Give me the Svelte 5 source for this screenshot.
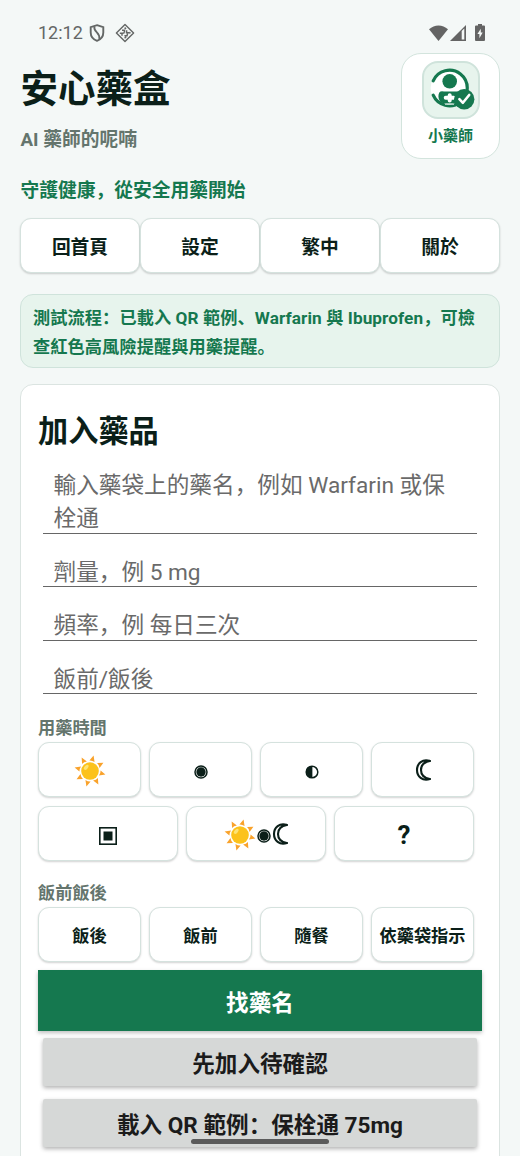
<script lang="ts">
	type Glyph = 'sun' | 'noon' | 'evening' | 'moon' | 'box' | 'help';

	const navItems = ['回首頁', '設定', '繁中', '關於'];

	const timeRows: Glyph[][][] = [
		[['sun'], ['noon'], ['evening'], ['moon']],
		[['box'], ['sun', 'noon', 'moon'], ['help']]
	];

	const mealOptions = ['飯後', '飯前', '隨餐', '依藥袋指示'];

	const rays = [12, 57, 102, 147, 192, 237, 282, 327];

	let name = $state('');
	let dose = $state('');
	let frequency = $state('');
	let meal = $state('');
</script>

{#snippet glyph(kind: Glyph)}
	{#if kind === 'sun'}
		<svg class="sun" width="32" height="32" viewBox="0 0 32 32">
			{#each rays as angle}
				<path d="M13.2 5.8 16.3.2 18.6 6.3Q15.8 5 13.2 5.8Z" fill="#f9a22b" transform="rotate({angle} 16 16)" />
			{/each}
			<circle cx="16" cy="16" r="8.8" fill="#fcc21b" />
			<ellipse cx="12.2" cy="12.3" rx="3" ry="1.7" fill="#fde374" transform="rotate(-50 12.2 12.3)" />
		</svg>
	{:else if kind === 'noon'}
		<svg class="low noon" width="14" height="14" viewBox="0 0 14 14">
			<circle cx="7" cy="7" r="6" fill="none" stroke="#0b1f19" stroke-width="1.5" />
			<circle cx="7" cy="7" r="4.7" fill="#0b1f19" />
		</svg>
	{:else if kind === 'evening'}
		<svg class="low" width="14" height="14" viewBox="0 0 14 14">
			<circle cx="7" cy="7" r="5.8" fill="none" stroke="#0b1f19" stroke-width="1.5" />
			<path d="M7.4 1A6 6 0 0 0 7.4 13Z" fill="#0b1f19" />
		</svg>
	{:else if kind === 'moon'}
		<svg class="moon" width="16" height="22" viewBox="0 0 16 22">
			<path
				d="M14.8 1.9C7.5-.4 2 4.4 2 11S7.5 22.4 14.8 20.1C9.4 19 6 15.5 6 11S9.4 3 14.8 1.9Z"
				fill="none"
				stroke="#0b1f19"
				stroke-width="2.1"
			/>
		</svg>
	{:else if kind === 'box'}
		<svg class="low" width="18" height="18" viewBox="0 0 18 18">
			<rect x=".8" y=".8" width="16.4" height="16.4" fill="none" stroke="#0b1f19" stroke-width="1.6" />
			<rect x="4.5" y="4.5" width="9" height="9" fill="#0b1f19" />
		</svg>
	{:else}
		<span class="question">?</span>
	{/if}
{/snippet}

<div class="screen">
	<div class="status">
		<span class="clock">12:12</span>
		<svg class="shield" width="16" height="18" viewBox="0 0 16 18" fill="none" stroke="#646766" stroke-width="1.9">
			<path d="M8 1.2 14.3 3.2V8.5C14.3 12.5 11.8 15.4 8 16.8 4.2 15.4 1.7 12.5 1.7 8.5V3.2Z" />
			<path d="M5.4 2.4C4.2 8.6 11.4 7.8 10.4 15.4" stroke-width="1.8" />
		</svg>
		<svg class="diamond" width="20" height="20" viewBox="0 0 20 20" fill="none" stroke="#646766">
			<path d="M10 1.4 18.6 10 10 18.6 1.4 10Z" stroke-width="1.4" stroke-linejoin="round" />
			<path
				d="M9.6 4.6 11 6M7 7.2H9.4V9.4M11.6 7.2V9.8H14M4.8 10.2H7.4M7 12.8V10.6L9.6 9.6M9.4 12.8H12L12.6 10.6M14.2 9.2 15.4 10.4M9.6 15.2 11.2 13.8"
				stroke-width="1.5"
			/>
		</svg>
		<span class="spacer"></span>
		<svg width="19" height="16" viewBox="0 0 19 16" fill="#646464">
			<path d="M0 4.2C5.4-.9 13.6-.9 19 4.2L9.5 16Z" />
		</svg>
		<svg class="signal" width="16" height="16" viewBox="0 0 16 16" fill="#646464">
			<path d="M0 16 16 0V16ZM11.7 6V14.5H14.3V3.4Z" fill-rule="evenodd" />
		</svg>
		<svg class="battery" width="10" height="17" viewBox="0 0 10 17" fill="#646464">
			<path d="M3 0H7V1.6H9Q10 1.6 10 2.6V16Q10 17 9 17H1Q0 17 0 16V2.6Q0 1.6 1 1.6H3ZM5.8 4.8 2.4 10H4.4V14.2L7.7 8.6H5.8Z" fill-rule="evenodd" />
		</svg>
	</div>

	<header>
		<div class="titles">
			<h1>安心藥盒</h1>
			<p class="subtitle">AI 藥師的呢喃</p>
		</div>
		<div class="mascot">
			<svg width="58" height="58" viewBox="0 0 58 58">
				<rect x="1" y="1" width="56" height="56" rx="15" fill="#e7f4ed" stroke="#cfe3db" stroke-width="2" />
				<circle cx="27.2" cy="27" r="18.5" fill="#fff" />
				<path d="M11.2 19.8A17.8 17.8 0 1 1 11.2 34.2" fill="none" stroke="#15784f" stroke-width="3.2" stroke-linecap="round" />
				<circle cx="27.7" cy="20.3" r="7.3" fill="#15784f" />
				<path d="M22 30.5H36V42.5H24Q16.4 42 16.4 35.5T22 30.5Z" fill="#15784f" />
				<path d="M27.7 34.2V39.4M23.7 36.8H31.7" stroke="#fff" stroke-width="4" stroke-linecap="round" />
				<path d="M23 43.3H32" stroke="#fff" stroke-width=".8" />
				<circle cx="42.2" cy="38.2" r="10.2" fill="#15784f" />
				<path d="M37.4 38.2 40.9 41.8 47.2 34" fill="none" stroke="#fff" stroke-width="2.6" stroke-linecap="round" stroke-linejoin="round" />
			</svg>
			<span>小藥師</span>
		</div>
	</header>

	<p class="tagline">守護健康，從安全用藥開始</p>

	<nav>
		{#each navItems as item}
			<button class="tile">{item}</button>
		{/each}
	</nav>

	<div class="notice">測試流程：已載入 QR 範例、Warfarin 與 Ibuprofen，可檢查紅色高風險提醒與用藥提醒。</div>

	<section class="card">
		<h2>加入藥品</h2>
		<textarea class="field tall" placeholder="輸入藥袋上的藥名，例如 Warfarin 或保栓通" bind:value={name}></textarea>
		<input class="field" placeholder="劑量，例 5 mg" bind:value={dose} />
		<input class="field" placeholder="頻率，例 每日三次" bind:value={frequency} />
		<input class="field" placeholder="飯前/飯後" bind:value={meal} />

		<h3>用藥時間</h3>
		{#each timeRows as row}
			<div class="options">
				{#each row as option}
					<button class="tile">
						{#each option as kind}
							{@render glyph(kind)}
						{/each}
					</button>
				{/each}
			</div>
		{/each}

		<h3 class="meal-label">飯前飯後</h3>
		<div class="options">
			{#each mealOptions as option}
				<button class="tile small">{option}</button>
			{/each}
		</div>

		<button class="primary">找藥名</button>
		<button class="secondary">先加入待確認</button>
		<button class="secondary">載入 QR 範例：保栓通 75mg</button>
	</section>

	<div class="home-bar"></div>
</div>

<style>
	:global(body) {
		margin: 0;
		background: #f4f8f7;
	}

	.screen {
		position: relative;
		box-sizing: border-box;
		width: 520px;
		height: 1156px;
		padding: 0 20px;
		overflow: hidden;
		background: #f4f8f7;
		color: #0b1f19;
		font-family: Roboto, 'Noto Sans CJK SC', sans-serif;
	}

	.screen * {
		box-sizing: border-box;
	}

	h1,
	h2,
	h3,
	p {
		margin: 0;
	}

	button,
	input,
	textarea {
		font-family: inherit;
		margin: 0;
	}

	.status {
		display: flex;
		align-items: center;
		height: 53px;
		padding: 12px 15.5px 0 18px;
		color: #646766;
	}

	.clock {
		width: 45px;
		font-size: 18px;
		white-space: nowrap;
	}

	.shield {
		margin-left: 6px;
	}

	.diamond {
		margin-left: 10px;
	}

	.spacer {
		flex: 1;
	}

	.signal {
		margin-left: 2px;
	}

	.battery {
		margin-left: 9px;
	}

	header {
		display: flex;
		justify-content: space-between;
		height: 106px;
	}

	h1 {
		padding: 8px 0 0 0.5px;
		font-size: 37.5px;
		line-height: 56px;
		font-weight: 700;
	}

	.subtitle {
		margin-top: 9px;
		padding-left: 0.5px;
		color: #64756d;
		font-size: 18.75px;
		line-height: 28px;
		font-weight: 700;
	}

	.mascot {
		display: flex;
		flex-direction: column;
		align-items: center;
		width: 99px;
		padding-top: 7px;
		border: 1px solid #d3e4dd;
		border-radius: 20px;
		background: #fff;
		color: #15784f;
		font-size: 15px;
		line-height: 22px;
		font-weight: 700;
	}

	.mascot span {
		margin-top: 6px;
	}

	.tagline {
		padding: 18px 0 0 0.5px;
		color: #15784f;
		font-size: 18.75px;
		line-height: 28px;
		font-weight: 700;
	}

	nav {
		display: grid;
		grid-template-columns: repeat(4, 1fr);
		margin-top: 13px;
	}

	.tile {
		display: flex;
		align-items: center;
		justify-content: center;
		height: 55px;
		padding: 0;
		border: 1.5px solid #d5e2de;
		border-radius: 11px;
		background: #fff;
		box-shadow: 0 1px 2px rgba(0, 0, 0, 0.18);
		color: #0b1f19;
		font-size: 18.75px;
		font-weight: 700;
		white-space: nowrap;
	}

	.tile.small {
		font-size: 17.2px;
	}

	.notice {
		height: 74px;
		margin-top: 21px;
		padding: 9px 12px 7px;
		border: 1px solid #cfe3db;
		border-radius: 13px;
		background: #e7f4ed;
		color: #15784f;
		font-size: 17.2px;
		line-height: 29px;
		font-weight: 700;
		letter-spacing: 0.09px;
	}

	.card {
		height: 800px;
		margin-top: 16px;
		padding: 25px 16px 0 17px;
		border: 1.5px solid #dbe4e1;
		border-radius: 13px;
		background: #fff;
	}

	h2 {
		font-size: 30.2px;
		line-height: 44px;
		font-weight: 700;
	}

	.field {
		display: block;
		width: 434px;
		height: 40px;
		margin: 13.5px 0 0 5px;
		padding: 11px 11px 0 10.5px;
		border: 0;
		border-bottom: 1.3px solid #666;
		border-radius: 0;
		outline: none;
		background: transparent;
		color: #222;
		font-size: 22.65px;
		line-height: 33px;
		resize: none;
		overflow: hidden;
	}

	.field.tall {
		height: 66px;
		padding: 1px 20px 0 10.5px;
	}

	.field::placeholder {
		color: #6a6a6a;
		opacity: 1;
	}

	h3 {
		margin-top: 21px;
		color: #64756d;
		font-size: 17.2px;
		line-height: 27px;
		font-weight: 700;
	}

	.options {
		display: flex;
		gap: 8px;
		width: 436px;
	}

	.options + .options {
		margin-top: 9px;
	}

	.options .tile {
		flex: 1 1 0;
		min-width: 0;
	}

	.sun {
		margin-top: 2px;
	}

	.low {
		margin-top: 4px;
	}

	.sun + .noon {
		margin-right: 1px;
		margin-left: 1px;
	}

	.moon {
		margin-top: 1px;
	}

	.meal-label {
		margin-top: 19px;
	}

	.question {
		padding-top: 2px;
		font-size: 26px;
	}

	.primary,
	.secondary {
		display: block;
		border: 0;
		font-size: 22.6px;
		font-weight: 700;
	}

	.primary {
		width: 444px;
		height: 61px;
		margin-top: 8px;
		padding-top: 3px;
		background: #15784f;
		box-shadow: 0 2px 4px rgba(0, 0, 0, 0.25);
		color: #fff;
	}

	.secondary {
		width: 434px;
		height: 48px;
		margin: 7px 0 0 5px;
		border-radius: 2px;
		background: #d6d8d7;
		box-shadow: 0 2px 4px rgba(0, 0, 0, 0.3);
		color: #1b1b1b;
	}

	.secondary + .secondary {
		margin-top: 13px;
	}

	.home-bar {
		position: absolute;
		left: 191px;
		bottom: 12px;
		width: 138px;
		height: 5px;
		border-radius: 3px;
		background: #5b5b5b;
	}
</style>
